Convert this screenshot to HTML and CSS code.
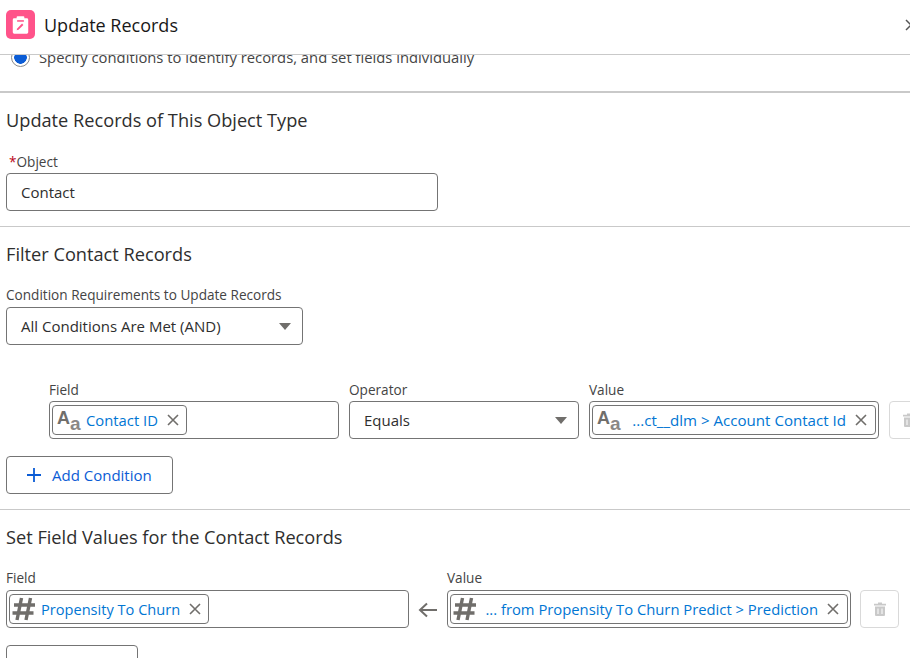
FILE: index.html
```html
<!DOCTYPE html>
<html lang="en">
<head>
<meta charset="utf-8">
<title>Update Records</title>
<link rel="stylesheet" href="styles.css">
</head>
<body>
<div class="page">
  <header class="header">
    <span class="app-icon">
      <svg viewBox="0 0 30 30" width="30" height="30">
        <path fill="#fff" d="M12 6h6a1 1 0 0 1 1 1v1h2.500A1.500 1.500 0 0 1 23 9.500v13a1.500 1.500 0 0 1-1.500 1.500h-13A1.500 1.500 0 0 1 7 22.500v-13A1.500 1.500 0 0 1 8.500 8H11V7a1 1 0 0 1 1-1z"/>
        <rect x="11.500" y="10" width="7" height="1.600" fill="#ff538a"/>
        <path d="M11 20.500l.6-2 5-5 1.400 1.400-5 5z" fill="#ff538a"/>
      </svg>
    </span>
    <h1 class="title">Update Records</h1>
    <svg class="close" viewBox="0 0 12 12" width="12" height="12"><path d="M1 1l10 10M11 1L1 11" stroke="#555" stroke-width="1.500" fill="none"/></svg>
  </header>
  <main class="content">
    <div class="radio-row">
      <span class="radio"></span>
      <span>Specify conditions to identify records, and set fields individually</span>
    </div>
    <section class="section first">
      <h2 class="heading">Update Records of This Object Type</h2>
      <label class="label object-label"><span class="req">*</span>Object</label>
      <div class="box object-box">Contact</div>
    </section>
    <section class="section">
      <h2 class="heading">Filter Contact Records</h2>
      <label class="label req-label">Condition Requirements to Update Records</label>
      <div class="box select-box">All Conditions Are Met (AND)<span class="caret"></span></div>
      <div class="cond-grid">
        <div>
          <label class="label">Field</label>
          <div class="box pill-box">
            <span class="pill">
              <span class="ty-aa"><span class="aa-big">A</span><span class="aa-small">a</span></span>
              <span class="pill-text">Contact ID</span>
              <svg class="x" viewBox="0 0 12 12" width="12" height="12"><path d="M1 1l10 10M11 1L1 11"/></svg>
            </span>
          </div>
        </div>
        <div>
          <label class="label">Operator</label>
          <div class="box op-box">Equals<span class="caret"></span></div>
        </div>
        <div>
          <label class="label">Value</label>
          <div class="box pill-box">
            <span class="pill full">
              <span class="ty-aa"><span class="aa-big">A</span><span class="aa-small">a</span></span>
              <span class="pill-text grow val-a">...ct__dlm &gt; Account Contact Id</span>
              <svg class="x" viewBox="0 0 12 12" width="12" height="12"><path d="M1 1l10 10M11 1L1 11"/></svg>
            </span>
          </div>
        </div>
        <div class="del-wrap">
          <span class="del">
            <svg viewBox="0 0 16 16" width="16" height="16"><path fill="#c9c9c9" d="M6 1.500h4v1.200h4V4.500H2V2.700h4zM3 5.500h10V14a1 1 0 0 1-1 1H4a1 1 0 0 1-1-1zM5.500 7.500v5.500h1V7.500zM9.500 7.500v5.500h1V7.500z"/></svg>
          </span>
        </div>
      </div>
      <button class="btn add-btn">
        <svg viewBox="0 0 16 16" width="16" height="16"><path d="M8 1v14M1 8h14" stroke="#0b5cd5" stroke-width="1.800" fill="none"/></svg>
        Add Condition
      </button>
    </section>
    <section class="section">
      <h2 class="heading">Set Field Values for the Contact Records</h2>
      <div class="set-grid">
        <div>
          <label class="label">Field</label>
          <div class="box pill-box">
            <span class="pill">
              <svg class="hash" viewBox="0 0 26 26" width="26" height="26"><path d="M10.500 2L6 24M19.500 2L15 24M3 9h21M1.500 17h21"/></svg>
              <span class="pill-text val-c">Propensity To Churn</span>
              <svg class="x" viewBox="0 0 12 12" width="12" height="12"><path d="M1 1l10 10M11 1L1 11"/></svg>
            </span>
          </div>
        </div>
        <svg class="arrow" viewBox="0 0 20 16" width="20" height="16"><path d="M19 8H2M9 1.500L2 8l7 6.500" stroke="#706e6b" stroke-width="2" fill="none"/></svg>
        <div>
          <label class="label">Value</label>
          <div class="box pill-box">
            <span class="pill full">
              <svg class="hash" viewBox="0 0 26 26" width="26" height="26"><path d="M10.500 2L6 24M19.500 2L15 24M3 9h21M1.500 17h21"/></svg>
              <span class="pill-text grow">... from Propensity To Churn Predict &gt; Prediction</span>
              <svg class="x" viewBox="0 0 12 12" width="12" height="12"><path d="M1 1l10 10M11 1L1 11"/></svg>
            </span>
          </div>
        </div>
        <span class="del">
          <svg viewBox="0 0 16 16" width="16" height="16"><path fill="#c9c9c9" d="M6 1.500h4v1.200h4V4.500H2V2.700h4zM3 5.500h10V14a1 1 0 0 1-1 1H4a1 1 0 0 1-1-1zM5.500 7.500v5.500h1V7.500zM9.500 7.500v5.500h1V7.500z"/></svg>
        </span>
      </div>
      <button class="btn partial-btn"></button>
    </section>
  </main>
</div>
</body>
</html>
```
FILE: styles.css
```css
* { box-sizing: border-box; }
html, body { margin: 0; padding: 0; }
body { font-family: "Open Sans", "Noto Sans", sans-serif; color: #2e2e2e; background: #fff; }
.page { width: 910px; height: 658px; overflow: hidden; display: flex; flex-direction: column; }
.header { height: 55px; flex: none; display: flex; align-items: center; padding: 0 0 5px 6px; border-bottom: 1px solid #c9c9c9; background: #fff; position: relative; z-index: 1; }
.app-icon { width: 29px; height: 29px; border-radius: 5px; background: #ff538a; display: flex; align-items: center; justify-content: center; }
.title { margin: 0 0 0 9px; font-size: 18px; font-weight: 400; color: #181818; }
.close { margin-left: auto; margin-right: -7px; }
.content { flex: 1; min-height: 0; overflow: hidden; }
.radio-row { display: flex; align-items: center; gap: 9px; height: 20px; margin-top: -8px; padding-left: 11px; font-size: 14.800px; color: #444; }
.radio { width: 19px; height: 19px; border: 1px solid #8a8a8a; border-radius: 50%; background: radial-gradient(circle, #0b5cd5 0 6px, #fff 6.500px); flex: none; }
.section { border-top: 1px solid #c9c9c9; padding: 0 6px; height: 283px; }
.section.first { border-top: 2px solid #c9c9c9; margin-top: 24px; height: 135px; }
.heading { margin: 0; font-size: 18.200px; line-height: 24px; font-weight: 400; color: #2e2e2e; padding-top: 15px; height: 40px; }
.label { display: block; font-size: 13.600px; line-height: 16px; color: #444; }
.object-label { margin-top: 21px; padding-left: 3px; }
.req { color: #ba0517; }
.box { height: 38px; border: 1px solid #747474; border-radius: 4px; background: #fff; font-size: 15px; color: #2e2e2e; display: flex; align-items: center; }
.object-box { width: 432px; margin-top: 3px; padding-left: 14px; }
.req-label { margin-top: 20px; }
.select-box { width: 297px; margin-top: 4px; padding: 0 11px 0 14px; justify-content: space-between; }
.caret { width: 0; height: 0; border-left: 6.500px solid transparent; border-right: 6.500px solid transparent; border-top: 7px solid #706e6b; }
.cond-grid { display: grid; grid-template-columns: 290px 230px 290px 40px; column-gap: 10px; margin-top: 37px; padding-left: 43px; width: 940px; }
.cond-grid .label { margin-bottom: 3px; }
.del-wrap { padding-top: 19px; }
.op-box { padding: 0 11px 0 14px; justify-content: space-between; }
.pill-box { padding: 0 2px; }
.pill { height: 30px; display: inline-flex; align-items: center; border: 1px solid #747474; border-radius: 4px; padding: 0 7px 0 1px; background: #fff; }
.pill.full { width: 100%; padding-right: 8px; }
.ty-aa { flex: none; width: 28px; height: 28px; margin-left: 1px; padding-left: 2px; display: flex; align-items: flex-start; font-family: "Liberation Sans", sans-serif; font-weight: 700; }
.aa-big { font-size: 18px; line-height: 20px; color: #706e6b; margin-top: 2px; }
.aa-small { font-size: 19px; line-height: 20px; color: #8a8886; margin-top: 8px; }
.hash { flex: none; margin-right: 1px; fill: none; stroke: #706e6b; stroke-width: 3.400; }
.pill-text { color: #0176d3; font-size: 14.800px; margin-left: 3px; white-space: nowrap; }
.pill-text.grow { flex: 1; text-align: right; margin-right: 9px; }
.pill-text.val-a { font-size: 15.100px; }
.pill-text.val-c { font-size: 14.600px; }
.x { fill: none; stroke: #706e6b; stroke-width: 1.600; margin-left: 9px; flex: none; }
.grow + .x { margin-left: 0; }
.del { width: 39px; height: 38px; border: 1px solid #d9d9d9; border-radius: 4px; display: flex; align-items: center; justify-content: center; }
.btn { display: flex; align-items: center; background: #fff; border: 1px solid #747474; border-radius: 4px; font-family: inherit; }
.add-btn { width: 167px; height: 38px; margin-top: 17px; padding: 0 0 0 19px; gap: 10px; font-size: 15px; color: #0b5cd5; }
.set-grid { display: grid; grid-template-columns: 403px 38px 404px 48px; align-items: end; margin-top: 20px; }
.set-grid .label { margin-bottom: 4px; }
.set-grid .arrow { justify-self: center; align-self: end; margin-bottom: 10px; }
.set-grid .del { margin-left: 9px; }
.partial-btn { width: 132px; height: 38px; margin-top: 17px; }
```
